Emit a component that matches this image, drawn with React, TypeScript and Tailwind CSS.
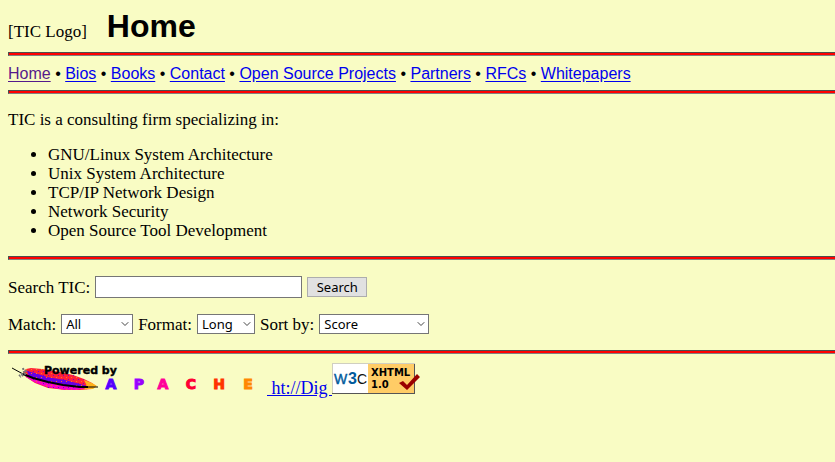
import React, { useState } from "react";
import { ChevronDown } from "lucide-react";

const navLinks = [
  { label: "Home", visited: true },
  { label: "Bios" },
  { label: "Books" },
  { label: "Contact" },
  { label: "Open Source Projects" },
  { label: "Partners" },
  { label: "RFCs" },
  { label: "Whitepapers" },
];

const services = [
  "GNU/Linux System Architecture",
  "Unix System Architecture",
  "TCP/IP Network Design",
  "Network Security",
  "Open Source Tool Development",
];

const Rule: React.FC = () => (
  <hr className="h-1 border-0 border-t border-b border-l border-t-[#4d4d4d] border-l-[#4d4d4d] border-b-[#808080] bg-[#ff0000]" />
);

interface SelectFieldProps {
  id: string;
  label: string;
  options: string[];
  width: string;
}

const SelectField: React.FC<SelectFieldProps> = ({
  id,
  label,
  options,
  width,
}) => (
  <div className="flex items-center gap-[5px]">
    <label htmlFor={id}>{label}</label>
    <div className={`relative ${width}`}>
      <select
        id={id}
        className="block h-5 w-full appearance-none border border-[#767676] bg-white pl-1 pr-4 font-['Noto_Sans',sans-serif] text-[13px] leading-[18px]"
      >
        {options.map((option) => (
          <option key={option}>{option}</option>
        ))}
      </select>
      <ChevronDown
        className="pointer-events-none absolute right-0.5 top-1 h-3 w-3 text-[#444444]"
        strokeWidth={2}
      />
    </div>
  </div>
);

const ApacheLogo: React.FC = () => (
  <svg
    className="inline-block align-baseline"
    width="259"
    height="32"
    viewBox="0 0 259 32"
    role="img"
    aria-label="Powered by Apache"
  >
    <defs>
      <pattern id="speckle" width="5" height="4" patternUnits="userSpaceOnUse">
        <rect x="0" y="1" width="1" height="1" fill="#7a00c8" />
        <rect x="3" y="3" width="1" height="1" fill="#ff7a1a" />
      </pattern>
    </defs>
    <path
      d="M18 7 L23 6 L34 7 L52 10 L65 13 L76 17 L84 21 L88 24 L84 27 L72 28 L58 28 L40 26 L27 21 L18 15 L15 10 Z"
      fill="#ff2038"
    />
    <path
      d="M16 11 L29 16 L47 20 L68 23 L82 25 L69 28 L57 28 L39 25 L26 20 L18 15 Z"
      fill="#f800c8"
    />
    <path
      d="M19 9 L27 11 L39 15 L57 18 L72 22 L83 25 L71 25 L53 23 L36 20 L21 14 Z"
      fill="#6500e8"
    />
    <path
      d="M18 7 L34 7 L65 13 L84 21 L84 27 L58 28 L40 26 L18 15 Z"
      fill="url(#speckle)"
    />
    <path d="M76 18 L84 21 L89 24 L85 27 L76 27 L79 24 Z" fill="#ffb319" />
    <path d="M4 6 L15 12" fill="none" stroke="#000000" strokeWidth="1" />
    <path
      d="M15 12 L25 16 L40 20 L55 23 L72 25 L80 25"
      fill="none"
      stroke="#000000"
      strokeWidth="2"
    />
    <path d="M80 25 L90 25" fill="none" stroke="#000000" strokeWidth="1" />
    <path
      d="M15 6 L16 10 L11 14 M18 8 L17 12 L12 15"
      fill="none"
      stroke="#777777"
      strokeWidth="2"
      strokeDasharray="2 1"
    />
    <text
      x="36"
      y="12"
      className="font-['DejaVu_Sans',sans-serif] text-[11px] font-bold"
      stroke="#000000"
      strokeWidth="0.4"
    >
      Powered by
    </text>
    <g
      className="font-['DejaVu_Sans',sans-serif] text-[14px] font-bold"
      textAnchor="middle"
    >
      <text x="103" y="27" fill="#5500ff" stroke="#5500ff">A</text>
      <text x="131" y="27" fill="#9900ff" stroke="#9900ff">P</text>
      <text x="155" y="27" fill="#ff0099" stroke="#ff0099">A</text>
      <text x="183" y="27" fill="#ff0033" stroke="#ff0033">C</text>
      <text x="211" y="27" fill="#ff3300" stroke="#ff3300">H</text>
      <text x="240" y="27" fill="#ff8800" stroke="#ff8800">E</text>
    </g>
  </svg>
);

const XhtmlBadge: React.FC = () => (
  <svg
    className="inline-block align-baseline"
    width="88"
    height="31"
    viewBox="0 0 88 31"
    role="img"
    aria-label="Valid XHTML 1.0"
  >
    <path d="M0 0 H83 V31 H0 Z" fill="#d0cfc0" />
    <path d="M1 30 H82 V1 H83 V31 H0 V30 Z" fill="#555555" />
    <rect x="1" y="1" width="35" height="29" fill="#ffffff" />
    <rect x="36" y="1" width="46" height="29" fill="#ffcc66" />
    <g className="font-['Liberation_Sans',sans-serif]">
      <text x="2" y="21" fill="#005a9c" stroke="#005a9c" strokeWidth="0.4" className="text-[14px]">
        W
      </text>
      <text x="16" y="21" fill="#005a9c" className="text-[16px] font-bold">
        3
      </text>
      <text x="25" y="21" fill="#111111" className="text-[14px]">
        C
      </text>
    </g>
    <g className="font-['DejaVu_Sans',sans-serif] text-[10px] font-bold">
      <text x="39" y="13">XHTML</text>
      <text x="39" y="25">1.0</text>
    </g>
    <path d="M67 20 L71 18 L75 22 L85 11 L88 14 L75 27 Z" fill="#990000" />
  </svg>
);

const App: React.FC = () => {
  const [query, setQuery] = useState("");

  return (
    <div className="min-h-screen bg-[#f9fcc4] pl-2 font-['Liberation_Serif',serif] text-[17px] leading-[19px] text-black">
      <header className="flex items-baseline gap-5 pb-2 pt-2">
        <span>[TIC Logo]</span>
        <h1 className="font-['Liberation_Sans',sans-serif] text-[32px] font-bold leading-9">
          Home
        </h1>
      </header>
      <Rule />

      <nav className="pb-[7px] pt-[9px] font-['Liberation_Sans',sans-serif] text-[16px] leading-[18px]">
        {navLinks.map((link, index) => (
          <React.Fragment key={link.label}>
            {index > 0 && " • "}
            <a
              href="#"
              className={
                link.visited
                  ? "text-[#551a8b] underline underline-offset-2"
                  : "text-[#0000ee] underline underline-offset-2"
              }
            >
              {link.label}
            </a>
          </React.Fragment>
        ))}
      </nav>
      <Rule />

      <main>
        <p className="py-4">TIC is a consulting firm specializing in:</p>
        <ul className="mb-4 list-disc pl-10">
          {services.map((service) => (
            <li key={service}>{service}</li>
          ))}
        </ul>
        <Rule />

        <form className="py-4" onSubmit={(e) => e.preventDefault()}>
          <div className="flex items-center gap-[5px]">
            <label htmlFor="words">Search TIC:</label>
            <input
              id="words"
              type="text"
              value={query}
              onChange={(e) => setQuery(e.target.value)}
              className="h-[22px] w-[207px] border border-[#767676] bg-white px-1 text-[13px]"
            />
            <button
              type="submit"
              className="h-5 w-[60px] border border-[#adadad] bg-[#e1e1e1] font-['Noto_Sans',sans-serif] text-[13px] leading-[18px]"
            >
              Search
            </button>
          </div>
          <div className="mt-4 flex flex-wrap items-center gap-[5px]">
            <SelectField
              id="match"
              label="Match:"
              options={["All", "Any", "Boolean"]}
              width="w-[72px]"
            />
            <SelectField
              id="format"
              label="Format:"
              options={["Long", "Short"]}
              width="w-[58px]"
            />
            <SelectField
              id="sort"
              label="Sort by:"
              options={["Score", "Time", "Title", "Reverse Score"]}
              width="w-[110px]"
            />
          </div>
        </form>
        <Rule />
      </main>

      <footer className="pt-2 text-[18px]">
        <a href="#">
          <ApacheLogo />
        </a>
        <a
          href="#"
          className="whitespace-pre text-[#0000ee] underline underline-offset-1"
        >
          {" ht://Dig "}
        </a>
        <a href="#">
          <XhtmlBadge />
        </a>
      </footer>
    </div>
  );
};

export default App;
